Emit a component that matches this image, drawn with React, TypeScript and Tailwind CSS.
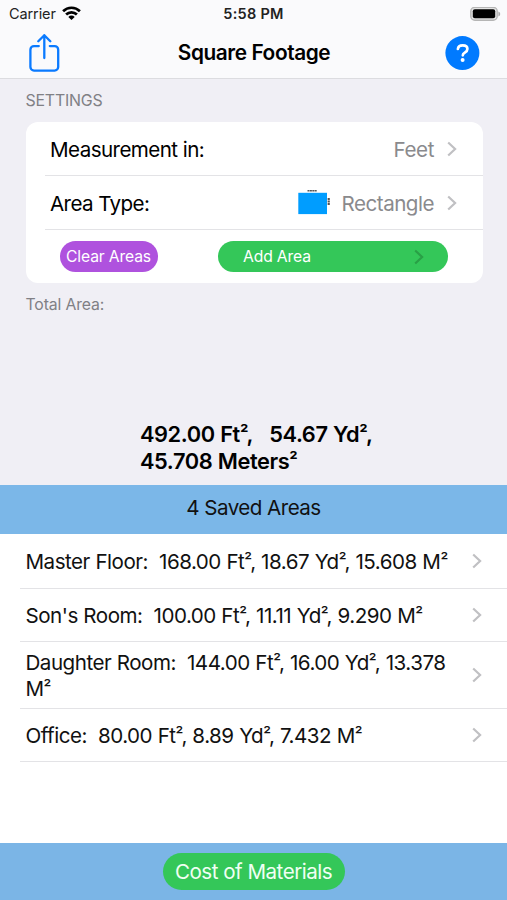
import React from 'react';

interface SavedArea {
  name: string;
  detail: string;
  height: string;
}

const savedAreas: SavedArea[] = [
  { name: 'Master Floor:', detail: '168.00 Ft², 18.67 Yd², 15.608 M²', height: 'h-[55px]' },
  { name: "Son's Room:", detail: '100.00 Ft², 11.11 Yd², 9.290 M²', height: 'h-[53px]' },
  { name: 'Daughter Room:', detail: '144.00 Ft², 16.00 Yd², 13.378 M²', height: 'h-[67px]' },
  { name: 'Office:', detail: '80.00 Ft², 8.89 Yd², 7.432 M²', height: 'h-[53px]' },
];

// Sets the squared signs a little smaller, with a following comma tucked under them
const Units: React.FC<{ text: string }> = ({ text }) => (
  <>
    {text.split(/(²,?|\s+)/).map((part, i) =>
      part.startsWith('²') ? (
        <React.Fragment key={i}>
          <span className={`text-[0.86em] leading-none align-[0.09em] ${part.length > 1 ? 'mr-[-1.5px]' : ''}`}>²</span>
          {part.slice(1)}
        </React.Fragment>
      ) : (
        part
      )
    )}
  </>
);

const Chevron: React.FC<{ className?: string }> = ({ className = 'text-[#c0c0c3]' }) => (
  <svg width="10" height="16" viewBox="0 0 10 16" fill="none" className={`shrink-0 ${className}`}>
    <path d="M1.2 1.5 8.1 8l-6.9 6.5" stroke="currentColor" strokeWidth="2.2" />
  </svg>
);

const StatusBar: React.FC = () => (
  <div className="h-7 px-[9px] grid grid-cols-3 items-center text-[14.5px] leading-7 text-[#222]">
    <div className="flex items-center gap-1.5">
      <span className="tracking-[-0.1px]">Carrier</span>
      <svg width="19" height="15" viewBox="0 0 19 15" fill="none" stroke="#000" strokeWidth="2.7" className="mt-[-2px]">
        <path d="M1.1 5.2a12 12 0 0 1 16.8 0" />
        <path d="M4.1 8.5a7.7 7.7 0 0 1 10.8 0" />
        <path d="m9.5 14-3.2-3.1a4.6 4.6 0 0 1 6.4 0z" fill="#000" stroke="none" />
      </svg>
    </div>
    <span className="text-center font-semibold tracking-[0.25px]">5:58 PM</span>
    <svg width="31" height="15" viewBox="0 0 31 15" className="justify-self-end -mr-[3px]">
      <rect x="0.8" y="0.3" width="26.4" height="13" rx="4" fill="#e4e4e4" stroke="#b5b5b5" strokeWidth="1.4" />
      <rect x="2.8" y="2.3" width="22.4" height="9" rx="2" fill="#000" />
      <path d="M28.4 4.5c2.4 1 2.4 4 0 5z" fill="#ababab" />
    </svg>
  </div>
);

const NavBar: React.FC = () => (
  <div className="h-[51px] pl-[29px] pr-[27px] flex items-center justify-between border-b border-[#dcdce0]">
    <svg width="31" height="39" viewBox="0 0 31 39" fill="none" stroke="#0a7aff" strokeWidth="2.3" strokeLinecap="round" strokeLinejoin="round">
      <path d="M9.8 12.1H5a3.6 3.6 0 0 0-3.6 3.6v17.3a3.6 3.6 0 0 0 3.6 3.6h20.6a3.6 3.6 0 0 0 3.6-3.6V15.7a3.6 3.6 0 0 0-3.6-3.6h-4.8" />
      <path d="M15.3 24V1.2M9.3 7.2l6-6 6 6" />
    </svg>
    <h1 className="ml-[3px] text-[20.8px] font-semibold tracking-[-0.4px]">Square Footage</h1>
    <svg width="35" height="35" viewBox="0 0 35 35" fill="none">
      <circle cx="17.4" cy="17.1" r="17" fill="#007aff" />
      <path d="M12.9 13c.2-2.5 2.1-3.7 4.8-3.7 2.8 0 4.7 1.4 4.7 3.6 0 1.9-1.1 2.8-2.6 3.7-1.4.9-2 1.4-2 2.7" stroke="#fff" strokeWidth="2.7" strokeLinecap="round" />
      <circle cx="17.6" cy="24" r="2" fill="#fff" />
    </svg>
  </div>
);

const RectangleIcon: React.FC = () => (
  <svg width="34" height="27" viewBox="0 0 34 27">
    <rect x="0.3" y="2.8" width="28.7" height="21.3" fill="#009dff" />
    <path d="M9.5 .7h9.5" stroke="#555" strokeWidth="1.4" strokeDasharray="2 .4" />
    <path d="M30.7 8v7.5" stroke="#555" strokeWidth="2.2" strokeDasharray="2 .5" />
  </svg>
);

const App: React.FC = () => {
  return (
    <div className="w-[507px] h-[900px] flex flex-col overflow-hidden bg-[#f0eff5] text-black font-['Inter','Liberation_Sans',sans-serif]">
      <header className="shrink-0 bg-[#fafafc]">
        <StatusBar />
        <NavBar />
      </header>

      <section className="h-[406px] shrink-0 pl-[25.5px] pr-[24.5px] flex flex-col">
        <h2 className="h-[43px] text-[15.9px] leading-[43px] text-[#808085] tracking-[-0.2px]">SETTINGS</h2>
        <div className="h-[161px] shrink-0 rounded-xl bg-white pl-[19px] overflow-hidden">
          <div className="h-[54px] pt-[3px] pl-[5.5px] pr-[25.5px] flex items-center border-b border-[#e3e3e6] text-[20.6px]">
            <span className="tracking-[-0.57px]">Measurement in:</span>
            <span className="ml-auto mr-[13px] text-[#8a8a8d] tracking-[-0.4px]">Feet</span>
            <Chevron className="mt-[-3px] text-[#c0c0c3]" />
          </div>
          <div className="h-[54px] pt-[3px] pl-[5.5px] pr-[25.5px] flex items-center border-b border-[#e3e3e6] text-[20.6px]">
            <span className="tracking-[-0.6px]">Area Type:</span>
            <div className="ml-auto mr-[13px] flex items-center gap-[9.5px]">
              <RectangleIcon />
              <span className="text-[#8a8a8d] tracking-[-0.5px]">Rectangle</span>
            </div>
            <Chevron className="mt-[-3px] text-[#c0c0c3]" />
          </div>
          <div className="h-[53px] pl-[15px] pr-[34.5px] flex items-center justify-between text-[15.7px] text-white">
            <button className="w-[98px] h-[31px] rounded-full bg-[#af52de] whitespace-nowrap tracking-[-0.15px]">Clear Areas</button>
            <button className="w-[230px] h-[31px] pl-[25px] pr-[24px] rounded-full bg-[#34c759] flex items-center justify-between tracking-[-0.15px]">
              Add Area
              <Chevron className="text-[#29a046]" />
            </button>
          </div>
        </div>
        <p className="mt-[9px] text-[15.8px] leading-[26px] text-[#808085] tracking-[-0.15px]">Total Area:</p>
        <p className="mt-auto mb-[11px] ml-[114.5px] text-[21.8px] leading-[26.5px] font-semibold tracking-[-0.42px] [word-spacing:0.5px] whitespace-pre">
          <Units text={'492.00 Ft²,   54.67 Yd²,\n45.708 Meters²'} />
        </p>
      </section>

      <div className="h-[49px] shrink-0 bg-[#7bb7e8] text-center text-[20.6px] leading-[46px] tracking-[-0.55px] text-[#111]">
        4 Saved Areas
      </div>

      <ul className="h-[309px] shrink-0 bg-white pl-[20px]">
        {savedAreas.map((area) => (
          <li
            key={area.name}
            className={`${area.height} pl-[5.5px] pr-[25.5px] flex items-center justify-between border-b border-[#e3e3e6]`}
          >
            <span className="w-[430px] mt-[2px] whitespace-pre-wrap text-[20.6px] leading-[26.5px] tracking-[-0.5px] [word-spacing:0.25px] text-[#111]">
              <Units text={`${area.name}  ${area.detail}`} />
            </span>
            <Chevron />
          </li>
        ))}
      </ul>

      <footer className="h-[57px] shrink-0 bg-[#7bb5e6] pt-[10px] flex justify-center items-start">
        <button className="w-[182px] h-[37px] pt-[2px] rounded-full bg-[#34c759] text-[20.6px] tracking-[-0.5px] text-[#f0fff3] whitespace-nowrap">
          Cost of Materials
        </button>
      </footer>
    </div>
  );
};

export default App;
